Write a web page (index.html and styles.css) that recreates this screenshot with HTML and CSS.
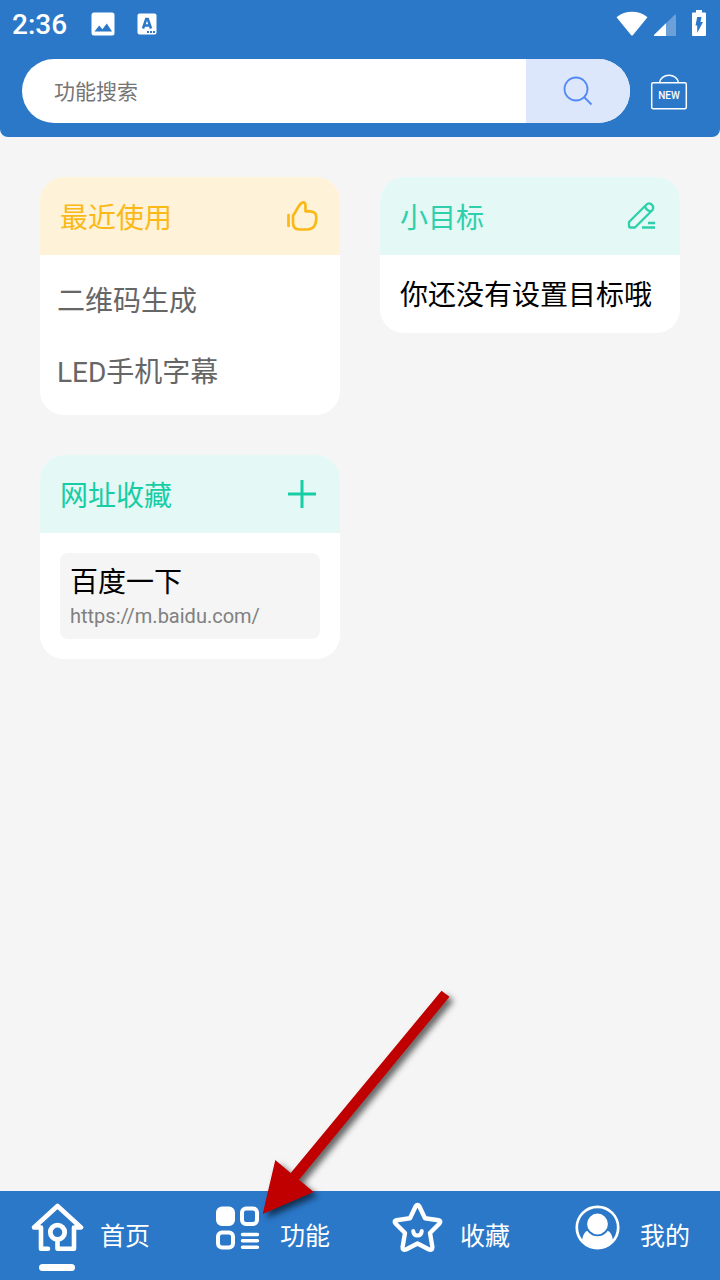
FILE: index.html
```html
<!DOCTYPE html>
<html lang="zh-CN">
<head>
<meta charset="utf-8">
<meta name="viewport" content="width=device-width, initial-scale=1">
<title>首页</title>
<link rel="stylesheet" href="styles.css">
</head>
<body>
<div class="app">
  <header class="header">
    <div class="status">
      <span class="clock">2:36</span>
      <svg class="status-image" width="24" height="24" viewBox="0 0 24 24"><rect x="0.5" y="0.5" width="23" height="23" rx="2.5" fill="#fff"/><path d="M3.5 19.5 8.2 13.5 11.4 17.2 15.8 11.5 21 19.5Z" fill="#2b78c9"/></svg>
      <svg class="status-lang" width="20" height="24" viewBox="0 0 20 24"><rect x="0.5" y="1.5" width="19" height="21" rx="2" fill="#fff"/><path d="M6 16.500 9.200 7H10.800L14 16.500M7.300 13.500H12.700" fill="none" stroke="#2b78c9" stroke-width="2.500"/><path d="M10 19h2v2h-2zM13 19h2v2h-2zM16 19h2v2h-2z" fill="#2b78c9"/></svg>
      <div class="status-right">
        <svg width="32" height="28" viewBox="0 0 32 28"><path d="M0.500 7.300C9.500 0 22.500 0 31.500 7.300L17 25Q16 26 15 25Z" fill="#fff"/></svg>
        <svg width="24" height="28" viewBox="0 0 24 28"><path d="M22 4.500Q23 4 23 5.500V26H1Q0.500 25.500 1 25Z" fill="#fff" opacity=".3"/><path d="M13 13.300V26H1.500Q0.500 25.500 1.200 24.800Z" fill="#fff"/></svg>
        <svg class="battery" width="16" height="28" viewBox="0 0 16 28"><path d="M5 0h6v2.500h3Q15 2.500 15 3.500V25q0 1-1 1H2q-1 0-1-1V3.500Q1 2.500 2 2.500H5Z" fill="#fff"/><path d="M6.200 7H10.500L9.500 12H12L6.200 23V15.500H4.500Z" fill="#2b78c9"/></svg>
      </div>
    </div>
    <div class="tools">
      <form class="search">
        <input class="search-input" type="text" placeholder="功能搜索" aria-label="功能搜索">
        <button class="search-button" type="button" aria-label="搜索">
          <svg width="32" height="32" viewBox="0 0 32 32" fill="none" stroke="#5289f5" stroke-width="1.800"><circle cx="14" cy="14" r="11.500"/><path d="M22 22 29.500 29.500"/></svg>
        </button>
      </form>
      <button class="bag" type="button" aria-label="NEW">
        <svg width="38" height="38" viewBox="0 0 38 38" fill="none" stroke="#fff" stroke-width="1.500"><rect x="1.700" y="10.700" width="34.600" height="26" rx="1.500"/><path d="M9.500 10.500C11 .8 27 .8 28.500 10.500"/></svg>
        <span class="bag-label">NEW</span>
      </button>
    </div>
  </header>

  <main class="board">
    <div class="column">
      <section class="card">
        <div class="card-head amber">
          <h2>最近使用</h2>
          <svg width="36" height="36" viewBox="0 0 36 36" fill="none" stroke="#fbb917" stroke-width="2.700" stroke-linecap="round" stroke-linejoin="round"><path d="M4.500 17V28"/><path d="M9 17.500C12.500 14 13.800 7 18 4.700C20.500 3.500 21.800 5.500 21.500 8.500V13.300H26.500C31 13.300 32.500 16.500 32.300 20.500C32 28 29 31.500 23 31.500H15.500C10.500 31.500 9 29 9 24.500Z"/></svg>
        </div>
        <ul class="recent">
          <li><a href="#qr">二维码生成</a></li>
          <li><a href="#led">LED手机字幕</a></li>
        </ul>
      </section>
      <section class="card">
        <div class="card-head green">
          <h2>网址收藏</h2>
          <button type="button" aria-label="添加"><svg width="36" height="36" viewBox="0 0 36 36" stroke="#17cda4" stroke-width="3"><path d="M4 18H32M18 4V32"/></svg></button>
        </div>
        <div class="links">
          <a class="link" href="#baidu"><span class="link-title">百度一下</span><span class="link-url">https://m.baidu.com/</span></a>
        </div>
      </section>
    </div>
    <div class="column">
      <section class="card">
        <div class="card-head teal">
          <h2>小目标</h2>
          <button type="button" aria-label="编辑"><svg width="36" height="36" viewBox="0 0 36 36" fill="none" stroke="#2ed0ab" stroke-width="2.300" stroke-linejoin="round"><path d="M5 24 22.300 6.700Q24.500 4.500 27 6Q30.500 8.500 28.500 12L11 29.500H6.500Q5 29.500 5 28ZM21 8Q22 12.500 27 13.500"/><path d="M18 29.500H31M24 25H31"/></svg></button>
        </div>
        <p class="goal">你还没有设置目标哦</p>
      </section>
    </div>
  </main>

  <nav class="tabs">
    <a class="tab active" href="#home">
      <svg width="54" height="54" viewBox="0 0 54 54" fill="none" stroke="#fff" stroke-width="4.600" stroke-linecap="round" stroke-linejoin="round"><path d="M18 48.800H11V27.500H4L27.500 6 51 27.500H44V48.800H27.500V42"/><circle cx="27.500" cy="32.300" r="7.200" stroke-width="4.800"/></svg>
      <span>首页</span>
    </a>
    <a class="tab" href="#functions">
      <svg width="54" height="54" viewBox="0 0 54 54" fill="none" stroke="#fff" stroke-width="4" stroke-linecap="round"><rect x="8" y="8.500" width="15" height="15.500" rx="4" fill="#fff"/><rect x="32" y="8.500" width="15" height="15.500" rx="4"/><rect x="8" y="32.500" width="15" height="15" rx="4"/><path d="M32.500 34.500H47.500M32.500 40.800H47.500M32.500 47.200H47.500" stroke-width="3.400"/></svg>
      <span>功能</span>
    </a>
    <a class="tab" href="#favorites">
      <svg width="54" height="54" viewBox="0 0 54 54" fill="none" stroke="#fff" stroke-width="4.400" stroke-linecap="round" stroke-linejoin="round"><path d="M25.700 6.200Q27.500 3.500 29.300 6.200L35 18.300 48.500 20.200Q51.500 21 49.500 23.500L40 33 42.400 47Q42.300 50.800 39 49.500L27.500 43.500 16 49.500Q12.500 50.800 12.600 47L15 33 5.500 23.500Q3.500 21 6.500 20.200L20 18.300Z"/><path d="M23.200 31C23.800 37 31.200 37 31.800 31" stroke-width="4"/></svg>
      <span>收藏</span>
    </a>
    <a class="tab" href="#mine">
      <svg width="54" height="54" viewBox="0 0 54 54"><circle cx="27.500" cy="27.500" r="20.700" fill="none" stroke="#fff" stroke-width="2.700"/><path d="M12 40Q13.500 31.500 18 30.500Q27.500 40.500 37 30.500Q41.500 31.500 43 40Q37 48.500 27.500 48.500Q18 48.500 12 40Z" fill="#fff"/><circle cx="27.500" cy="24" r="11.300" fill="#fff" stroke="#2b78c9" stroke-width="1.800"/></svg>
      <span>我的</span>
    </a>
    <svg class="pointer" width="220" height="250" viewBox="0 0 220 250" aria-hidden="true"><path d="M191.500 10.700 199.500 16.800 49 199.700 63.700 212 12.700 234 25.300 180 40.700 193Z" fill="#c00000"/></svg>
  </nav>
</div>
</body>
</html>
```

FILE: styles.css
```css
* { box-sizing: border-box; }

body {
  margin: 0;
  background: #f5f5f5;
  color: #000;
  font-family: Roboto, "Noto Sans CJK SC", sans-serif;
  font-size: 28px;
}

svg { display: block; flex: none; }
h2, p, ul { margin: 0; padding: 0; }
a { color: inherit; text-decoration: none; }

button {
  margin: 0;
  padding: 0;
  border: 0;
  background: none;
  font: inherit;
  cursor: pointer;
}

.app {
  display: flex;
  flex-direction: column;
  min-height: 100vh;
}

.header {
  padding-bottom: 14px;
  border-radius: 0 0 8px 8px;
  background: #2b78c9;
  color: #fff;
}

.status {
  display: flex;
  align-items: center;
  height: 48px;
  padding: 0 13px 0 12px;
}

.clock {
  padding-top: 2px;
  font-size: 28px;
  font-weight: 500;
  line-height: 48px;
}

.status-image { margin-left: 24px; }
.status-lang { margin-left: 22px; }

.status-right {
  display: flex;
  gap: 5px;
  margin-left: auto;
}

.battery { margin-left: 9px; }

.tools {
  display: flex;
  align-items: center;
  gap: 20px;
  margin-top: 11px;
  padding: 0 32px 0 22px;
}

.search {
  display: flex;
  flex: 1;
  height: 64px;
  overflow: hidden;
  border-radius: 32px;
  background: #fff;
}

.search-input {
  flex: 1;
  min-width: 0;
  padding: 2px 32px 0;
  border: 0;
  outline: 0;
  background: none;
  font: inherit;
  font-size: 21px;
}

.search-input::placeholder { color: #757575; }

.search-button {
  display: grid;
  place-items: center;
  width: 104px;
  background: #dce7fb;
}

.bag { position: relative; color: #fff; }

.bag-label {
  position: absolute;
  inset: 12px 0 0;
  font-size: 10px;
  font-weight: 500;
  line-height: 24px;
  text-align: center;
}

.board {
  display: grid;
  flex: 1;
  grid-template-columns: 1fr 1fr;
  align-items: start;
  gap: 40px;
  padding: 40px;
}

.column {
  display: grid;
  gap: 40px;
}

.card {
  overflow: hidden;
  border-radius: 24px;
  background: #fff;
}

.card-head {
  display: flex;
  align-items: center;
  justify-content: space-between;
  height: 78px;
  padding: 0 20px;
}

.card-head h2 {
  font-size: 28px;
  font-weight: 400;
}

.amber { background: #fef2d8; color: #fbb917; }
.green { background: #e4f8f6; color: #17cda4; }
.teal { background: #e4f8f6; color: #2ed0ab; }

.recent {
  padding: 11px 17px 7px;
  color: #666;
  line-height: 71px;
  list-style: none;
}

.goal {
  padding: 4px 20px 0;
  line-height: 74px;
}

.links { padding: 20px; }

.link {
  display: block;
  padding: 10px;
  border-radius: 8px;
  background: #f5f5f5;
}

.link-title,
.link-url { display: block; }

.link-title { line-height: 40px; }

.link-url {
  color: #808080;
  font-size: 20px;
  line-height: 26px;
}

.tabs {
  position: sticky;
  bottom: 0;
  display: grid;
  grid-template-columns: repeat(4, 1fr);
  background: #2b78c9;
  color: #fff;
}

.tab {
  position: relative;
  display: flex;
  align-items: flex-end;
  gap: 16px;
  padding: 9px 0 26px 30px;
  font-size: 25px;
  line-height: 34px;
}

.active::after {
  position: absolute;
  bottom: 9px;
  left: 39px;
  width: 36px;
  height: 7px;
  border-radius: 4px;
  background: #fff;
  content: "";
}

.pointer {
  position: absolute;
  bottom: 50px;
  left: 250px;
  filter: drop-shadow(4px 4px 3px rgba(0, 0, 0, 0.6));
  pointer-events: none;
}
```
